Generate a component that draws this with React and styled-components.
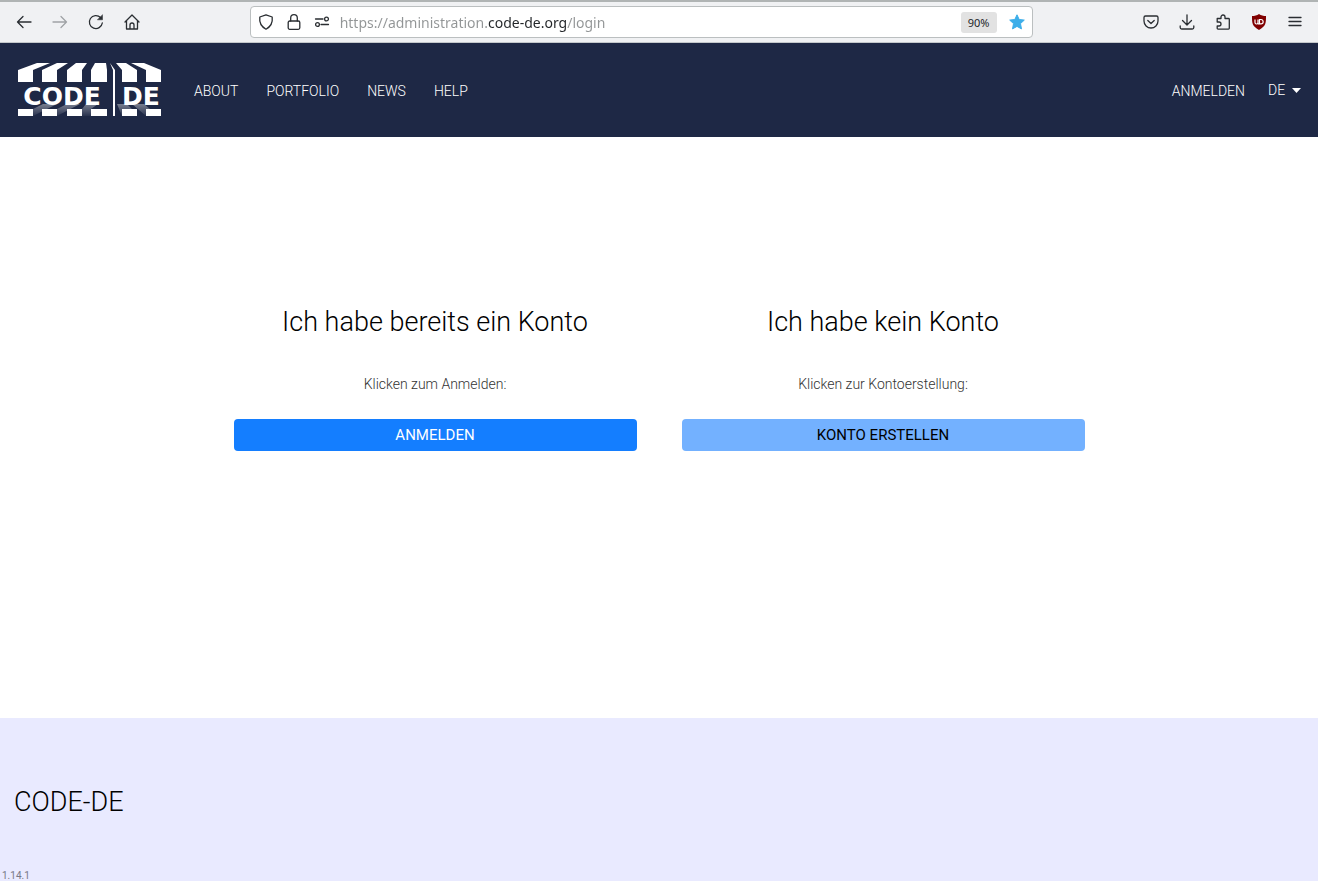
import React from "react";
import styled, { createGlobalStyle } from "styled-components";

const GlobalStyle = createGlobalStyle`
    * {
        box-sizing: border-box;
    }

    body {
        margin: 0;
        background: #ffffff;
        color: #000000;
        font-family: Roboto, "Open Sans", sans-serif;
        font-size: 14px;
    }
`;

const Page = styled.div`
    display: flex;
    flex-direction: column;
    min-height: 100vh;
`;

/* browser toolbar */
const Toolbar = styled.div`
    display: grid;
    grid-template-columns: 7fr minmax(0, 783px) 8fr;
    align-items: center;
    height: 43px;
    border-top: 2px solid #b0b4b4;
    border-bottom: 1px solid #c4c8cb;
    background: #f0f1f3;
`;

const ToolGroup = styled.div`
    display: flex;
    align-items: center;
    justify-content: ${(props) => (props.$end ? "flex-end" : "flex-start")};
    gap: 12px;
    padding: 0 ${(props) => (props.$end ? "11px" : "12px")};
`;

const ToolButton = styled.button`
    display: flex;
    align-items: center;
    justify-content: center;
    width: 24px;
    height: 24px;
    padding: 0;
    border: 0;
    background: none;
    color: #2a2e32;

    &:disabled {
        color: #a0a3a6;
    }
`;

const UrlBar = styled.div`
    display: flex;
    align-items: center;
    gap: 4px;
    height: 32px;
    padding: 0 3px;
    border: 1px solid #bbbfc0;
    border-radius: 4px;
    background: #ffffff;
`;

/* the host name is darker than the rest of the address */
const UrlInput = styled.input`
    flex: 1;
    min-width: 0;
    margin-left: 2px;
    padding: 0;
    border: 0;
    outline: 0;
    font-family: "Noto Sans", sans-serif;
    font-size: 14px;
    color: #232629;
    background: linear-gradient(90deg, #929596 148px, #232629 148px, #232629 227px, #929596 227px);
    background-clip: text;
    -webkit-text-fill-color: transparent;
`;

const ZoomButton = styled.button`
    width: 36px;
    height: 21px;
    margin-right: 4px;
    padding: 0;
    border: 0;
    border-radius: 3px;
    background: #e2e2e2;
    color: #232629;
    font-family: "Noto Sans", sans-serif;
    font-size: 11px;
`;

/* site header */
const Header = styled.header`
    display: flex;
    align-items: center;
    height: 94px;
    padding: 0 17px 0 14px;
    background: #1e2845;
`;

const LogoLink = styled.a`
    display: flex;
    margin-right: 28px;
`;

const Nav = styled.nav`
    display: flex;
    flex: 1;
    gap: 28px;
`;

const NavLink = styled.a`
    padding-top: 2px;
    color: #ffffff;
    font-size: 14px;
    font-weight: 300;
    line-height: 20px;
    text-decoration: none;
`;

const Language = styled.label`
    display: flex;
    align-items: center;
    margin-left: 23px;
    color: #ffffff;
`;

const LanguageSelect = styled.select`
    appearance: none;
    width: 24px;
    padding: 0;
    border: 0;
    background: none;
    color: #ffffff;
    font-family: inherit;
    font-size: 14px;
    font-weight: 300;
    line-height: 20px;
`;

/* content */
const Main = styled.main`
    flex: 1;
    padding: 165px 16px 0;
`;

const Columns = styled.div`
    display: grid;
    grid-template-columns: 1fr 1fr;
    gap: 45px;
    max-width: 851px;
    margin: 0 auto;
`;

const Column = styled.section`
    text-align: center;
`;

const Title = styled.h2`
    margin: 0;
    font-size: 27px;
    font-weight: 300;
    line-height: 40px;
`;

const Hint = styled.p`
    margin: 31px 0 24px;
    color: #333333;
    font-size: 14px;
    font-weight: 300;
    line-height: 22px;
`;

const ActionButton = styled.button`
    width: 100%;
    height: 32px;
    padding: 0;
    border: 0;
    border-radius: 4px;
    background: ${(props) => (props.$light ? "#73b1ff" : "#147eff")};
    color: ${(props) => (props.$light ? "#000000" : "#ffffff")};
    font-family: inherit;
    font-size: 15px;
`;

const Footer = styled.footer`
    display: flex;
    flex-direction: column;
    justify-content: space-between;
    height: 163px;
    padding: 64px 2px 0;
    background: #e9eaff;
`;

const FooterTitle = styled.h3`
    margin: 0 12px;
    font-size: 27px;
    font-weight: 300;
    line-height: 40px;
`;

const Version = styled.small`
    color: #777985;
    font-size: 10px;
    line-height: 10px;
`;

const Icon = ({ children, size = 16 }) => (
    <svg width={size} height={size} viewBox="0 0 16 16" fill="none" stroke="currentColor"
         strokeWidth="1.3" strokeLinecap="round" strokeLinejoin="round" aria-hidden="true">
        {children}
    </svg>
);

const Logo = () => (
    <svg width="152" height="54" viewBox="0 0 152 54" fill="#ffffff" role="img" aria-label="CODE-DE">
        <defs>
            <linearGradient id="ray" x1="0" y1="0" x2="0" y2="1">
                <stop offset="0" stopColor="#ffffff" stopOpacity="0.4"/>
                <stop offset="1" stopColor="#ffffff" stopOpacity="0.05"/>
            </linearGradient>
        </defs>
        <path d="M4 7 23 0H36L19 7V19H4Z"/>
        <path d="M28 7 43 0H54L43 7V19H28Z"/>
        <path d="M53 7 62 0H73L68 7V19H53Z"/>
        <path d="M77 7 81 0H92L93 7V19H77Z"/>
        <path d="M108 7 102 0H112L123 7V19H108Z"/>
        <path d="M132 7 117 0H130L147 7V19H132Z"/>
        <path d="M4 46H19V53H4ZM28 46H43V53H28ZM53 46H68V53H53ZM77 46H93V53H77ZM108 46H123V53H108ZM132 46H147V53H132Z"/>
        <path d="M96 0 101 7V53H99V7Z"/>
        <g fill="url(#ray)">
            <path d="M29 41H43L19 53V46Z"/>
            <path d="M53 41H66L43 53V46Z"/>
            <path d="M72 41H84L77 46V53H68V46Z"/>
            <path d="M103 41H113L118 46H108V53Z"/>
            <path d="M118 41H130L136 46H132V53Z"/>
        </g>
        <g fontFamily="DejaVu Sans, sans-serif" fontSize="25" fontWeight="bold" textAnchor="middle">
            <text x="48" y="42">CODE</text>
            <text x="127" y="42">DE</text>
        </g>
    </svg>
);

const App = () => {
    return (
        <Page>
            <GlobalStyle />
            <Toolbar>
                <ToolGroup>
                    <ToolButton aria-label="Zurück">
                        <Icon><path d="M15 8H1.5M7 2.5 1.5 8 7 13.5"/></Icon>
                    </ToolButton>
                    <ToolButton aria-label="Vor" disabled>
                        <Icon><path d="M1 8h13.500M9 2.500 14.500 8 9 13.500"/></Icon>
                    </ToolButton>
                    <ToolButton aria-label="Neu laden">
                        <Icon>
                            <path d="M14.300 9A6.500 6.500 0 1 1 12.500 3.500"/>
                            <path d="M14.500 1v4.800H9.700Z" fill="currentColor" strokeWidth="0.500"/>
                        </Icon>
                    </ToolButton>
                    <ToolButton aria-label="Startseite">
                        <Icon><path d="M1 8 8 1l7 7M2.500 7v8h11V7M6 15v-4a2 2 0 0 1 4 0v4"/></Icon>
                    </ToolButton>
                </ToolGroup>
                <UrlBar>
                    <ToolButton aria-label="Schutz">
                        <Icon><path d="M8 .8 14.200 3c.6 5-1.200 9.500-6.200 12.200C3 12.500 1.200 8 1.800 3Z"/></Icon>
                    </ToolButton>
                    <ToolButton aria-label="Verbindung">
                        <Icon>
                            <rect x="2.200" y="7" width="11.600" height="8.300" rx="1.500"/>
                            <path d="M4.700 7V4a3.300 3.300 0 0 1 6.600 0v3"/>
                        </Icon>
                    </ToolButton>
                    <ToolButton aria-label="Berechtigungen">
                        <Icon>
                            <path d="M1.500 5H9M7 10.500h7.500"/>
                            <circle cx="12.500" cy="5" r="1.900"/>
                            <circle cx="3.500" cy="10.500" r="1.900"/>
                        </Icon>
                    </ToolButton>
                    <UrlInput aria-label="Adresse" defaultValue="https://administration.code-de.org/login"/>
                    <ZoomButton>90%</ZoomButton>
                    <ToolButton aria-label="Lesezeichen">
                        <svg width="16" height="16" viewBox="0 0 16 16" fill="#3daee9" stroke="#3daee9"
                             strokeLinejoin="round" aria-hidden="true">
                            <path d="M8 .8l2.200 4.700 5.100.6-3.800 3.500 1 5.300L8 12.400l-4.500 2.500 1-5.300L.7 6.100l5.100-.6Z"/>
                        </svg>
                    </ToolButton>
                </UrlBar>
                <ToolGroup $end>
                    <ToolButton aria-label="Pocket">
                        <Icon>
                            <path d="M2.500 2h11A1.500 1.500 0 0 1 15 3.500V7A7 7 0 0 1 1 7V3.500A1.500 1.500 0 0 1 2.500 2Z"/>
                            <path d="M4.800 6.500 8 9.500l3.200-3"/>
                        </Icon>
                    </ToolButton>
                    <ToolButton aria-label="Downloads">
                        <Icon><path d="M8 .8v10M3.500 6.500 8 11l4.500-4.500M1.200 12v1.500A1.500 1.500 0 0 0 2.700 15h10.600a1.500 1.500 0 0 0 1.500-1.500V12"/></Icon>
                    </ToolButton>
                    <ToolButton aria-label="Erweiterungen">
                        <Icon><path d="M2.200 4.500H6V3a2 2 0 0 1 4 0v1.500h3.500a.8.8 0 0 1 .8.8v9a.8.8 0 0 1-.8.8H3a.8.8 0 0 1-.8-.8V12H4a2 2 0 0 0 0-4H2.200Z"/></Icon>
                    </ToolButton>
                    <ToolButton aria-label="uBlock Origin">
                        <svg width="16" height="16" viewBox="0 0 16 16" aria-hidden="true">
                            <path d="M8 0c2 1.500 4.500 2 7 2 0 7 0 10-7 14C1 12 1 9 1 2c2.500 0 5-.5 7-2Z" fill="#800000"/>
                            <path d="M4 5.500v3a1.500 1.500 0 0 0 3 0v-3M7 9.800h3a2.100 2.100 0 0 0 0-4.300H8.500v4" fill="none" stroke="#ffffff" strokeWidth="1.200"/>
                        </svg>
                    </ToolButton>
                    <ToolButton aria-label="Menü">
                        <Icon><path d="M2 3.500h12M2 7.500h12M2 11.500h12"/></Icon>
                    </ToolButton>
                </ToolGroup>
            </Toolbar>
            <Header>
                <LogoLink href="#">
                    <Logo />
                </LogoLink>
                <Nav>
                    <NavLink href="#about">ABOUT</NavLink>
                    <NavLink href="#portfolio">PORTFOLIO</NavLink>
                    <NavLink href="#news">NEWS</NavLink>
                    <NavLink href="#help">HELP</NavLink>
                </Nav>
                <NavLink href="#login">ANMELDEN</NavLink>
                <Language>
                    <LanguageSelect aria-label="Sprache" defaultValue="DE">
                        <option>DE</option>
                        <option>EN</option>
                    </LanguageSelect>
                    <svg width="9" height="5" viewBox="0 0 9 5" fill="currentColor" aria-hidden="true">
                        <path d="M0 0h9L4.500 5Z"/>
                    </svg>
                </Language>
            </Header>
            <Main>
                <Columns>
                    <Column>
                        <Title>Ich habe bereits ein Konto</Title>
                        <Hint>Klicken zum Anmelden:</Hint>
                        <ActionButton>ANMELDEN</ActionButton>
                    </Column>
                    <Column>
                        <Title>Ich habe kein Konto</Title>
                        <Hint>Klicken zur Kontoerstellung:</Hint>
                        <ActionButton $light>KONTO ERSTELLEN</ActionButton>
                    </Column>
                </Columns>
            </Main>
            <Footer>
                <FooterTitle>CODE-DE</FooterTitle>
                <Version>1.14.1</Version>
            </Footer>
        </Page>
    );
};

export default App;
